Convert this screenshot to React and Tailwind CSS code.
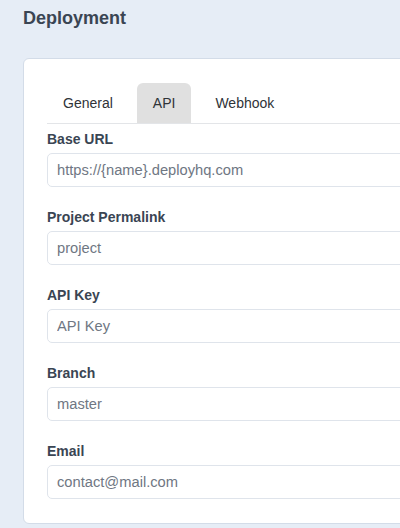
import React, { useState } from 'react'

const fields = [
    { label: 'Base URL', placeholder: 'https://{name}.deployhq.com' },
    { label: 'Project Permalink', placeholder: 'project' },
    { label: 'API Key', placeholder: 'API Key' },
    { label: 'Branch', placeholder: 'master' },
    { label: 'Email', placeholder: 'contact@mail.com' },
]

const tabs = ['General', 'API', 'Webhook']

const App = () => {
    const [active, setActive] = useState('API')

    return (
        <div className="w-[400px] h-[528px] overflow-hidden bg-[#e6edf6] font-['Liberation_Sans',Arial,sans-serif]">
            <div className="w-[440px] pl-[23px] pt-[4px]">
                <h1 className="text-[18px] leading-7 font-bold text-[#3a4553]">Deployment</h1>

                <div className="mt-[26px] bg-white border border-[#d3dce8] rounded-md pl-[23px] pt-[24px] pb-[24px]">
                    <div className="flex gap-2 border-b border-[#e3e5e8]">
                        {tabs.map((tab) => (
                            <button
                                key={tab}
                                onClick={() => setActive(tab)}
                                className={`h-10 px-4 text-sm text-[#2f3338] rounded-t-md ${active === tab ? 'bg-[#e0e0e0]' : ''}`}
                            >
                                {tab}
                            </button>
                        ))}
                    </div>

                    <form className="mt-[5px]">
                        {fields.map((field, i) => (
                            <div key={field.label} className={i > 0 ? 'mt-5' : ''}>
                                <label className="block text-sm leading-5 font-bold text-[#3a4553] mb-1">
                                    {field.label}
                                </label>
                                <input
                                    type="text"
                                    placeholder={field.placeholder}
                                    className="block w-full h-[34px] pl-[9px] pr-3 text-[14.7px] border border-[#dfe4eb] rounded-[5px] placeholder:text-[#6f7783] focus:outline-none"
                                />
                            </div>
                        ))}
                    </form>
                </div>
            </div>
        </div>
    )
}

export default App
